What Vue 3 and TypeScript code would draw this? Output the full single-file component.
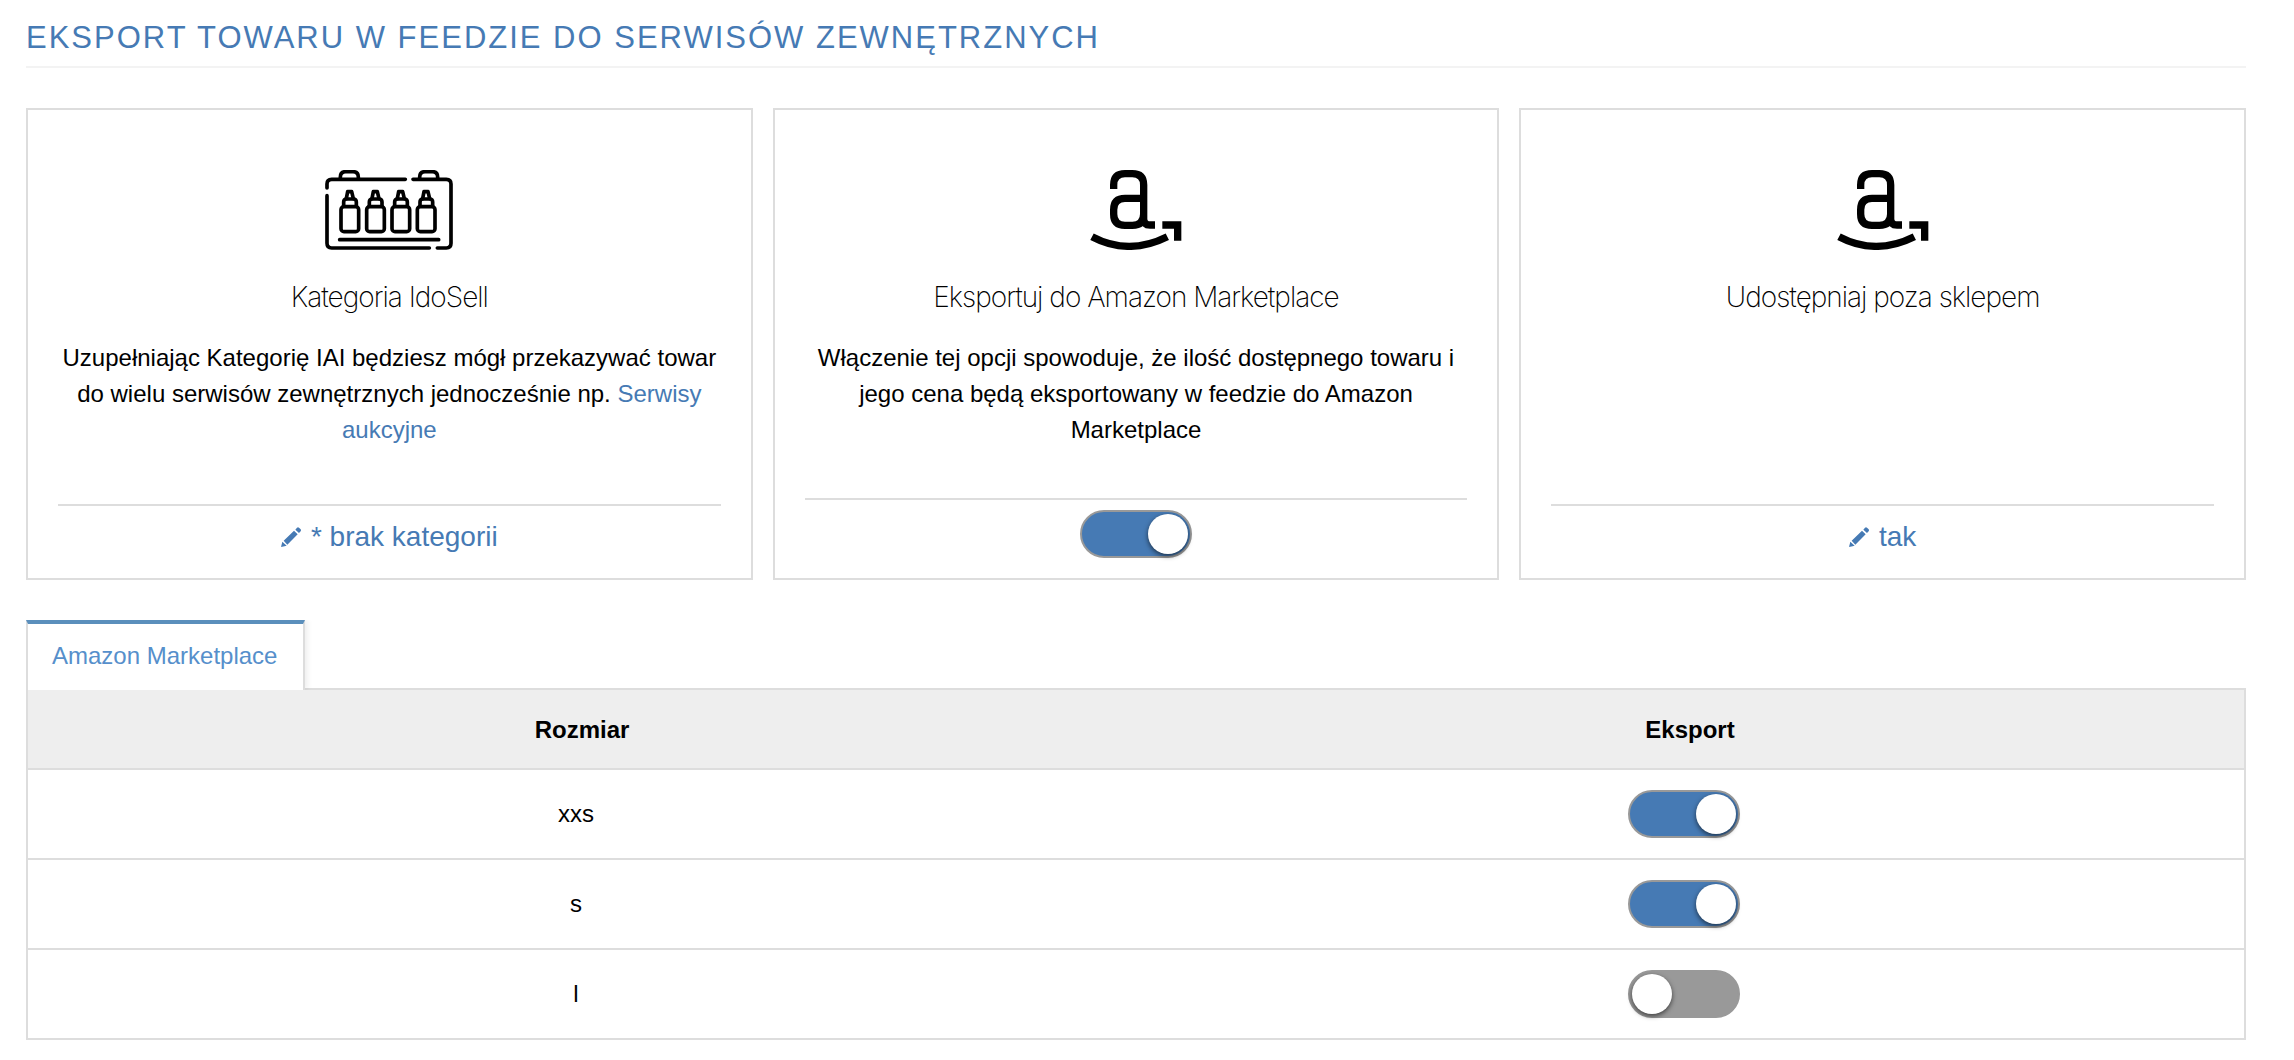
<script setup lang="ts">
import { reactive, ref } from 'vue'

interface SizeRow {
  name: string
  exported: boolean
}

const amazonExport = ref(true)

const sizes = reactive<SizeRow[]>([
  { name: 'xxs', exported: true },
  { name: 's', exported: true },
  { name: 'l', exported: false },
])

const bottleOffsets = [0, 77, 153, 229]
</script>

<template>
  <main class="page">
    <h1 class="page-title">Eksport towaru w feedzie do serwisów zewnętrznych</h1>

    <section class="cards">
      <article class="card">
        <svg class="card-icon" viewBox="78 60 384 240" width="128" height="80" aria-hidden="true">
          <g fill="none" stroke="#000" stroke-width="11" stroke-linecap="round" stroke-linejoin="round">
            <path d="M84 114v-12q0-14 14-14h221M342 88h100q14 0 14 14v178q0 14-14 14h-27M391 294H98q-14 0-14-14V137" />
            <path d="M124 86v-5q0-16 16-16h22q16 0 16 16v5M362 86v-5q0-16 16-16h22q16 0 16 16v5" />
            <path d="M122 269h297" />
            <g v-for="offset in bottleOffsets" :key="offset" :transform="`translate(${offset} 0)`">
              <rect x="126" y="170" width="53" height="75" rx="9" />
              <path d="M134 169v-13q0-9 9-9h20q9 0 9 9v13" />
              <path d="M142 146l4-21h12l5 21" />
            </g>
          </g>
        </svg>
        <h2 class="card-title">Kategoria IdoSell</h2>
        <p class="card-text">
          Uzupełniając Kategorię IAI będziesz mógł przekazywać towar do wielu serwisów zewnętrznych
          jednocześnie np. <a href="#serwisy-aukcyjne">Serwisy aukcyjne</a>
        </p>
        <footer class="card-footer">
          <a class="edit-link" href="#kategoria">
            <svg class="pencil" viewBox="0 0 60 60" width="20" height="20" aria-hidden="true">
              <path fill="currentColor" d="M0 60l4-16 13 12zM8 41L39 11l11 11-31 31zM43 8l5-6q3-3 6 0l5 5q2 3 0 6l-5 5z" />
            </svg>
            * brak kategorii
          </a>
        </footer>
      </article>

      <article class="card">
        <svg class="card-icon" viewBox="60 60 276 240" width="92" height="80" aria-hidden="true">
          <g fill="none" stroke="#000" stroke-width="22">
            <path d="M131 117v-12q0-34 34-34h22q34 0 34 34v87q0 34-34 34h-22q-34 0-34-34v-13q0-34 34-34h56M221 193v13q0 19 19 19h15" />
            <path d="M66 260q110 58 226 0" />
            <path d="M277 225h46v47" />
          </g>
        </svg>
        <h2 id="amazon-export" class="card-title">Eksportuj do Amazon Marketplace</h2>
        <p class="card-text">
          Włączenie tej opcji spowoduje, że ilość dostępnego towaru i jego cena będą eksportowany w
          feedzie do Amazon Marketplace
        </p>
        <footer class="card-footer">
          <input v-model="amazonExport" class="toggle" type="checkbox" role="switch" aria-labelledby="amazon-export" />
        </footer>
      </article>

      <article class="card">
        <svg class="card-icon" viewBox="60 60 276 240" width="92" height="80" aria-hidden="true">
          <g fill="none" stroke="#000" stroke-width="22">
            <path d="M131 117v-12q0-34 34-34h22q34 0 34 34v87q0 34-34 34h-22q-34 0-34-34v-13q0-34 34-34h56M221 193v13q0 19 19 19h15" />
            <path d="M66 260q110 58 226 0" />
            <path d="M277 225h46v47" />
          </g>
        </svg>
        <h2 class="card-title">Udostępniaj poza sklepem</h2>
        <footer class="card-footer">
          <a class="edit-link" href="#udostepnianie">
            <svg class="pencil" viewBox="0 0 60 60" width="20" height="20" aria-hidden="true">
              <path fill="currentColor" d="M0 60l4-16 13 12zM8 41L39 11l11 11-31 31zM43 8l5-6q3-3 6 0l5 5q2 3 0 6l-5 5z" />
            </svg>
            tak
          </a>
        </footer>
      </article>
    </section>

    <section class="panel">
      <nav class="tabs">
        <a class="tab" href="#amazon-marketplace" aria-current="page">Amazon Marketplace</a>
      </nav>
      <table class="sizes">
        <thead>
          <tr>
            <th scope="col">Rozmiar</th>
            <th id="col-export" scope="col">Eksport</th>
          </tr>
        </thead>
        <tbody>
          <tr v-for="size in sizes" :key="size.name">
            <td :id="`size-${size.name}`">{{ size.name }}</td>
            <td>
              <input
                v-model="size.exported"
                class="toggle"
                type="checkbox"
                role="switch"
                :aria-labelledby="`col-export size-${size.name}`"
              />
            </td>
          </tr>
        </tbody>
      </table>
    </section>
  </main>
</template>

<style>
body {
  background: #fff;
}
</style>

<style scoped>
.page {
  padding: 16px 48px 20px 26px;
  color: #000;
  font-family: 'Liberation Sans', Arial, sans-serif;
  font-size: 24px;
  line-height: 36px;
}

a {
  color: #467ab4;
  text-decoration: none;
}

.page-title {
  margin: 0 0 40px;
  padding-bottom: 6px;
  border-bottom: 2px solid #f3f3f3;
  color: #467ab4;
  font-size: 31px;
  font-weight: 400;
  line-height: 44px;
  letter-spacing: 2px;
  text-transform: uppercase;
}

.cards {
  display: grid;
  grid-template-columns: repeat(3, 1fr);
  gap: 20px;
}

.card {
  display: flex;
  flex-direction: column;
  align-items: center;
  padding: 60px 30px 0;
  border: 2px solid #ddd;
  text-align: center;
}

.card-icon {
  display: block;
}

.card-title {
  margin: 26px 0 22px;
  font-family: Inter, 'Liberation Sans', sans-serif;
  font-size: 28px;
  font-weight: 200;
  line-height: 42px;
  letter-spacing: -1px;
}

.card-text {
  margin: 0 0 50px;
}

.card-footer {
  display: flex;
  justify-content: center;
  align-self: stretch;
  margin-top: auto;
  padding: 10px 0 20px;
  border-top: 2px solid #ddd;
}

.edit-link {
  display: flex;
  align-items: center;
  gap: 10px;
  font-size: 28px;
  line-height: 42px;
}

.toggle {
  appearance: none;
  display: block;
  box-sizing: border-box;
  width: 112px;
  height: 48px;
  margin: 0;
  padding: 2px;
  border: 2px solid #999;
  border-radius: 24px;
  background: #999;
  cursor: pointer;
}

.toggle::before {
  content: '';
  display: block;
  width: 40px;
  height: 40px;
  border-radius: 50%;
  background: #fff;
  box-shadow: 0 2px 5px rgba(0, 0, 0, 0.6);
}

.toggle:checked {
  background: #467ab4;
}

.toggle:checked::before {
  margin-left: auto;
}

.panel {
  margin-top: 40px;
}

.tabs {
  display: flex;
}

.tab {
  position: relative;
  margin-bottom: -2px;
  padding: 14px 26px 16px 24px;
  border: 2px solid #ddd;
  border-top: 4px solid #5b8fbc;
  border-bottom: 0;
  background: #fff;
  box-shadow: 2px 0 6px rgba(0, 0, 0, 0.08);
  clip-path: inset(0 -10px 0 0);
  color: #568fcb;
}

.sizes {
  width: 100%;
  border: 2px solid #ddd;
  border-spacing: 0;
  table-layout: fixed;
  text-align: center;
}

.sizes th {
  padding: 22px 0 20px;
  background: #eee;
  font-weight: 700;
}

.sizes td {
  padding: 20px 12px 20px 0;
  border-top: 2px solid #ddd;
}

.sizes .toggle {
  margin: 0 auto;
}
</style>
